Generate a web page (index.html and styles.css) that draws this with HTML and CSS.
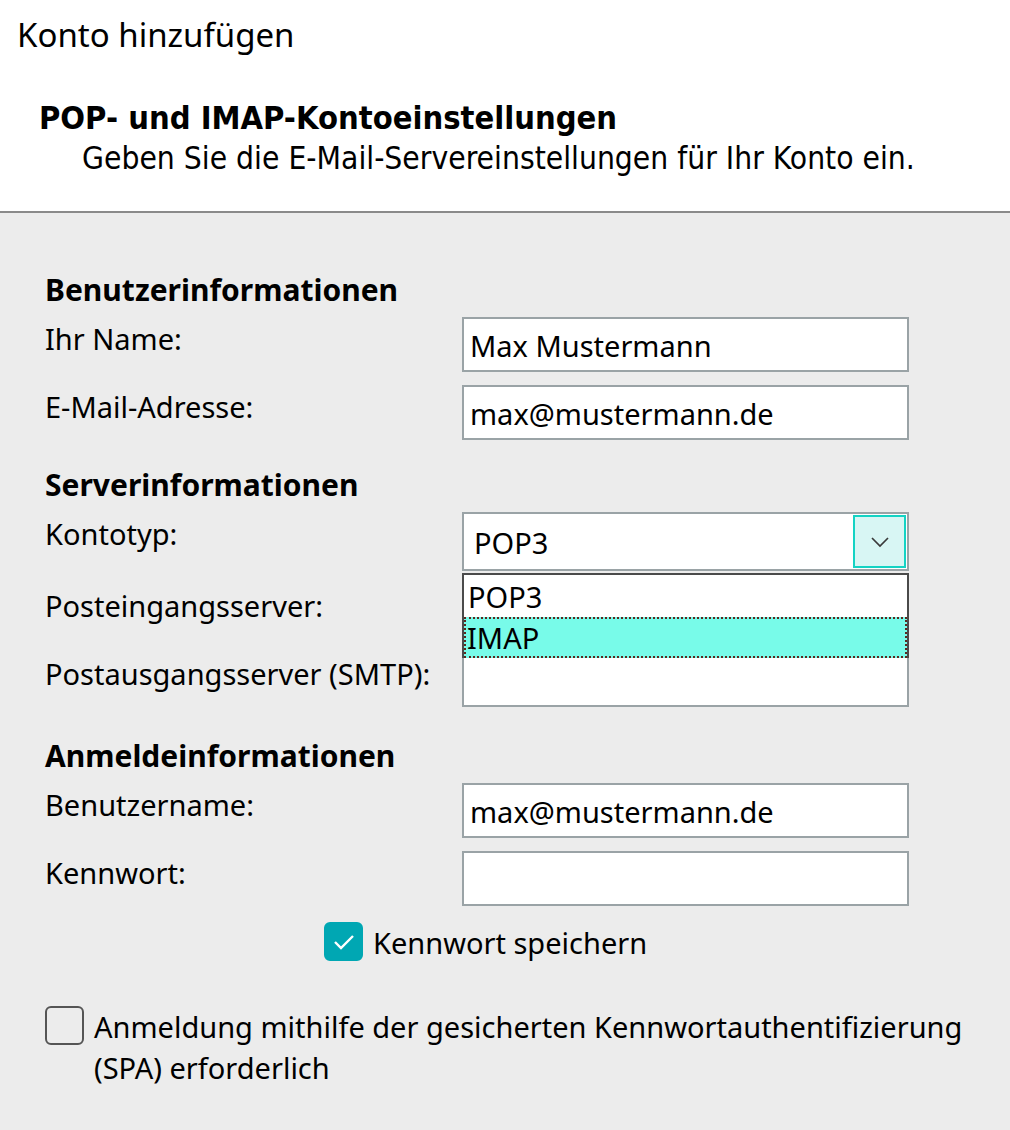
FILE: index.html
```html
<!DOCTYPE html>
<html lang="de">
<head>
<meta charset="utf-8">
<title>Konto hinzufügen</title>
<link rel="stylesheet" href="styles.css">
</head>
<body>
<div class="window">
  <header class="head">
    <div class="app-title">Konto hinzufügen</div>
    <div class="page-title">POP- und IMAP-Kontoeinstellungen</div>
    <div class="page-sub">Geben Sie die E-Mail-Servereinstellungen für Ihr Konto ein.</div>
  </header>
  <main class="body">
    <h2 class="section first">Benutzerinformationen</h2>
    <div class="row">
      <label class="lbl">Ihr Name:</label>
      <div class="field">Max Mustermann</div>
    </div>
    <div class="row">
      <label class="lbl">E-Mail-Adresse:</label>
      <div class="field">max@mustermann.de</div>
    </div>

    <h2 class="section server">Serverinformationen</h2>
    <div class="row">
      <label class="lbl">Kontotyp:</label>
      <div class="combo-wrap">
        <div class="combo">
          <span class="combo-val">POP3</span>
          <span class="combo-btn">
            <svg width="22" height="12" viewBox="0 0 22 12"><path d="M3 2 L11 10 L19 2" fill="none" stroke="#3a3a3a" stroke-width="1.7"/></svg>
          </span>
        </div>
        <ul class="list">
          <li class="opt">POP3</li>
          <li class="opt sel">IMAP</li>
        </ul>
      </div>
    </div>
    <div class="row">
      <label class="lbl">Posteingangsserver:</label>
      <div class="field"></div>
    </div>
    <div class="row">
      <label class="lbl">Postausgangsserver (SMTP):</label>
      <div class="field"></div>
    </div>

    <h2 class="section login">Anmeldeinformationen</h2>
    <div class="row">
      <label class="lbl">Benutzername:</label>
      <div class="field">max@mustermann.de</div>
    </div>
    <div class="row">
      <label class="lbl">Kennwort:</label>
      <div class="field"></div>
    </div>

    <div class="check-row save">
      <span class="box checked">
        <svg width="24" height="18" viewBox="0 0 24 18"><path d="M3 9 L9 15 L21 3" fill="none" stroke="#fff" stroke-width="2.4"/></svg>
      </span>
      <span class="check-text">Kennwort speichern</span>
    </div>

    <div class="check-row spa">
      <span class="box"></span>
      <span class="check-text">Anmeldung mithilfe der gesicherten Kennwortauthentifizierung<br>(SPA) erforderlich</span>
    </div>
  </main>
</div>
</body>
</html>
```
FILE: styles.css
```css
html, body {
  margin: 0;
  padding: 0;
}
body {
  width: 1010px;
  height: 1130px;
  background: #ececec;
  color: #000;
  font-family: "Noto Sans", "Open Sans", sans-serif;
  overflow: hidden;
}
.window {
  display: flex;
  flex-direction: column;
}
.head {
  background: #fff;
  height: 211px;
  border-bottom: 2px solid #8a8a8a;
  box-sizing: content-box;
}
.app-title {
  font-size: 33px;
  line-height: 40px;
  padding: 15px 0 0 17px;
  font-weight: 400;
}
.page-title {
  font-family: "DejaVu Sans Condensed", "DejaVu Sans", sans-serif;
  font-weight: bold;
  font-size: 32.4px;
  line-height: 40px;
  margin-top: 43px;
  padding-left: 39px;
}
.page-sub {
  font-family: "DejaVu Sans Condensed", "DejaVu Sans", sans-serif;
  font-size: 31.5px;
  line-height: 40px;
  padding-left: 82px;
  margin-top: 0;
}
.body {
  padding: 0 0 0 45px;
  display: flex;
  flex-direction: column;
}
.section {
  margin: 0;
  font-size: 30px;
  font-weight: bold;
  line-height: 34px;
  height: 34px;
  margin-bottom: 10px;
}
.section.first {
  margin-top: 60px;
}
.section.server {
  margin-top: 15px;
}
.section.login {
  margin-top: 19px;
}
.row {
  display: grid;
  grid-template-columns: 417px 447px;
  margin-bottom: 13px;
  font-size: 29px;
}
.lbl {
  line-height: 40px;
  padding-top: 2px;
  white-space: nowrap;
}
.field {
  box-sizing: border-box;
  height: 55px;
  border: 2px solid #9aa3a6;
  background: #fff;
  padding: 0 0 0 6px;
  line-height: 53px;
  font-size: 29px;
  white-space: nowrap;
}
.combo-wrap {
  position: relative;
  height: 59px;
}
.combo {
  box-sizing: border-box;
  height: 59px;
  border: 2px solid #9aa3a6;
  background: #fff;
  display: flex;
  align-items: center;
  justify-content: space-between;
  padding: 0 1px 0 10px;
}
.combo-val {
  font-size: 29px;
  line-height: 40px;
  padding-top: 2px;
}
.combo-btn {
  box-sizing: border-box;
  width: 53px;
  height: 53px;
  border: 2px solid #14d3c4;
  background: #d8f6f4;
  display: flex;
  align-items: center;
  justify-content: center;
}
.list {
  position: absolute;
  left: 0;
  top: 61px;
  width: 447px;
  box-sizing: border-box;
  margin: 0;
  padding: 1px 0 0;
  list-style: none;
  background: #fff;
  border: 2px solid #4a4a4a;
  border-bottom: none;
  z-index: 2;
}
.opt {
  height: 41px;
  line-height: 41px;
  font-size: 29px;
  padding-left: 4px;
  box-sizing: border-box;
}
.opt.sel {
  background: #78fbe9;
  outline: 2px dotted #5a2a20;
  outline-offset: -2px;
  padding-left: 3px;
}
.check-row {
  display: flex;
  align-items: flex-start;
  font-size: 29px;
}
.save {
  margin-top: 3px;
  padding-left: 279px;
}
.spa {
  margin-top: 43px;
}
.box {
  box-sizing: border-box;
  width: 39px;
  height: 39px;
  border: 2px solid #555;
  border-radius: 6px;
  background: #ececec;
  flex: 0 0 auto;
  display: flex;
  align-items: center;
  justify-content: center;
}
.box.checked {
  background: #00a7b3;
  border-color: #00a7b3;
}
.check-text {
  margin-left: 10px;
  line-height: 41px;
  white-space: nowrap;
}
```
